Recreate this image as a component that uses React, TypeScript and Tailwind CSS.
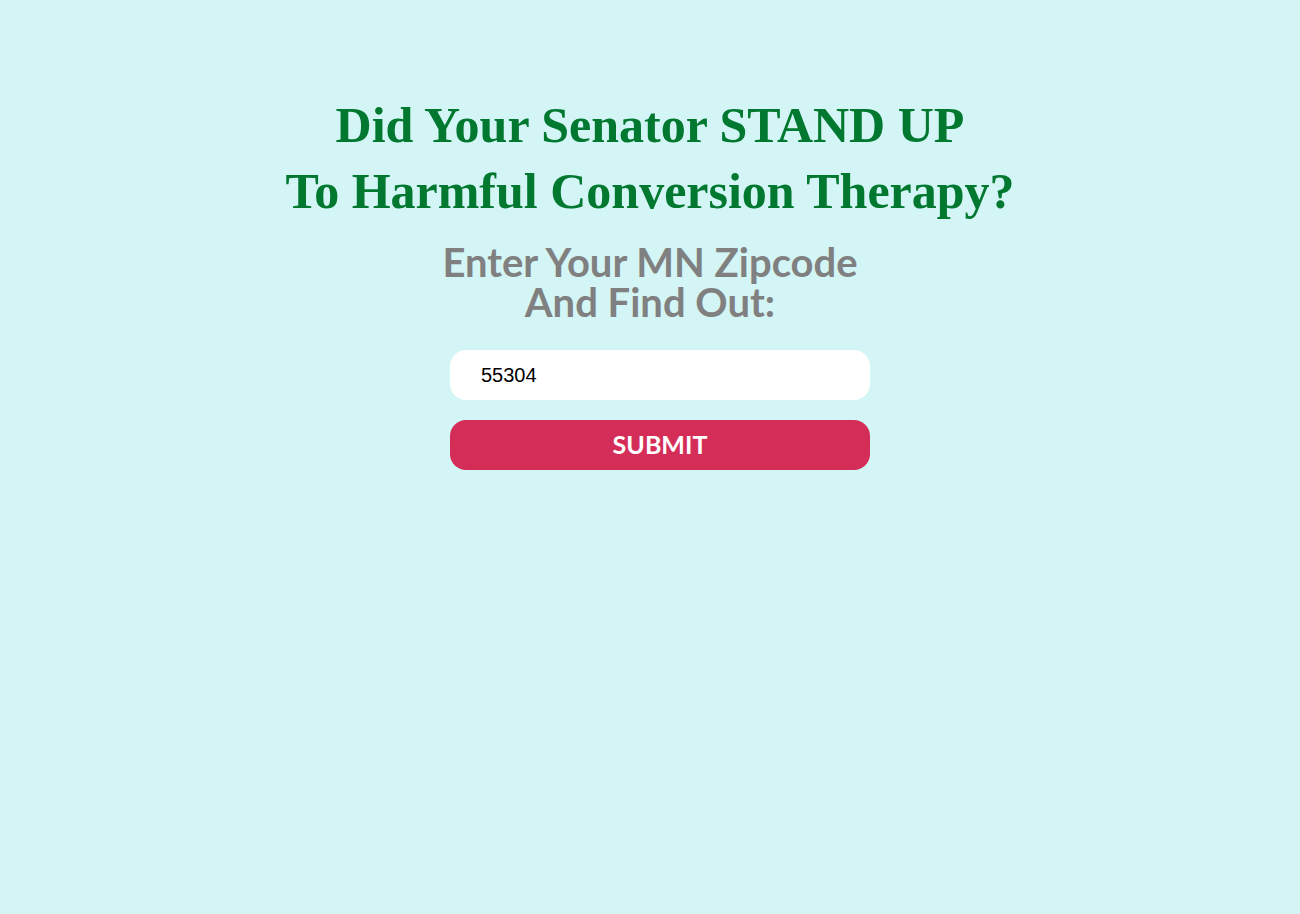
import { useState } from "react";

const App: React.FC = function () {
  const [zip, setZip] = useState("55304");

  return (
    <div className="min-h-screen w-full bg-[#d3f5f5] flex flex-col items-center pt-[92px]">
      {/* Headline */}
      <h1 className="text-center text-[#00782f] font-bold text-[50px] leading-[66px] [font-family:'Liberation_Serif',serif]">
        Did Your Senator STAND UP
        <br />
        To Harmful Conversion Therapy?
      </h1>

      {/* Subheading */}
      <h2 className="mt-[18px] text-center text-[#808080] font-bold text-[40px] leading-[40px] [font-family:Lato,sans-serif]">
        Enter Your MN Zipcode
        <br />
        And Find Out:
      </h2>

      {/* Form */}
      <form
        className="mt-[28px] ml-5 w-[420px] flex flex-col gap-5"
        onSubmit={(e) => e.preventDefault()}
      >
        <input
          value={zip}
          onChange={(e) => setZip(e.target.value)}
          className="h-[50px] w-full rounded-[16px] bg-white px-[31px] text-[20px] text-black outline-none [font-family:'Liberation_Sans',Arial,sans-serif]"
        />
        <button
          type="submit"
          className="h-[50px] w-full rounded-[16px] bg-[#d42e58] text-white font-bold text-[25px] [font-family:Lato,sans-serif]"
        >
          SUBMIT
        </button>
      </form>
    </div>
  );
};

export default App;
